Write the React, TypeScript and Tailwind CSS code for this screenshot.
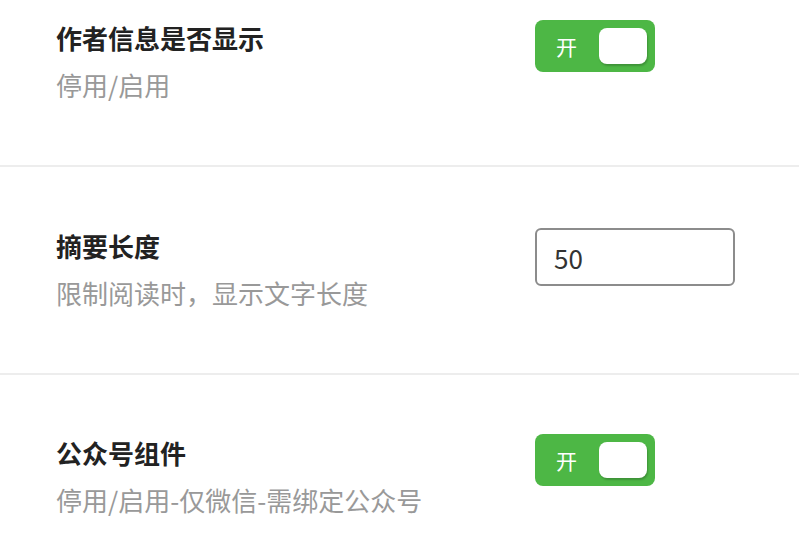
const font = { fontFamily: '"Noto Sans CJK SC", "Noto Sans", sans-serif' };

type Row = { title: string; desc: string; control: "switch" | "input"; value?: string };

const rows: Row[] = [
  { title: "作者信息是否显示", desc: "停用/启用", control: "switch" },
  { title: "摘要长度", desc: "限制阅读时，显示文字长度", control: "input", value: "50" },
  { title: "公众号组件", desc: "停用/启用-仅微信-需绑定公众号", control: "switch" },
];

function Switch() {
  return (
    <div className="w-[120px] h-[52px] bg-[#4db745] rounded-[8px] flex items-center justify-between pl-[21px] pr-[8px]">
      <span className="text-white text-[21px] leading-none">开</span>
      <div className="w-[48px] h-[36px] bg-white rounded-[8px] shadow-[1px_2px_2px_rgba(0,0,0,0.2)]"></div>
    </div>
  );
}

export default function App() {
  return (
    <div className="bg-white w-[799px] h-[559px] overflow-hidden" style={font}>
      {rows.map((row, index) => (
        <div
          key={index}
          className={
            "flex flex-row pl-[56px] border-[#ededed] " +
            (index === 0 ? "pt-[20px] pb-[62px] border-b-2" : index === 1 ? "pt-[61px] pb-[62px] border-b-2" : "pt-[60px]")
          }
        >
          <div className="w-[479px] flex flex-col">
            <span className="text-[26px] leading-[36px] font-bold text-[#222]">{row.title}</span>
            <span className="text-[26px] leading-[36px] text-[#999] mt-[11px]">{row.desc}</span>
          </div>
          {row.control === "switch" ? (
            <div className={index === 0 ? "" : "-mt-[1px]"}>
              <Switch />
            </div>
          ) : (
            <input
              className="w-[200px] h-[58px] border-2 border-[#8c8c8c] rounded-[6px] px-[17px] text-[26px] text-[#333] outline-none"
              defaultValue={row.value}
              style={font}
            />
          )}
        </div>
      ))}
    </div>
  );
}
